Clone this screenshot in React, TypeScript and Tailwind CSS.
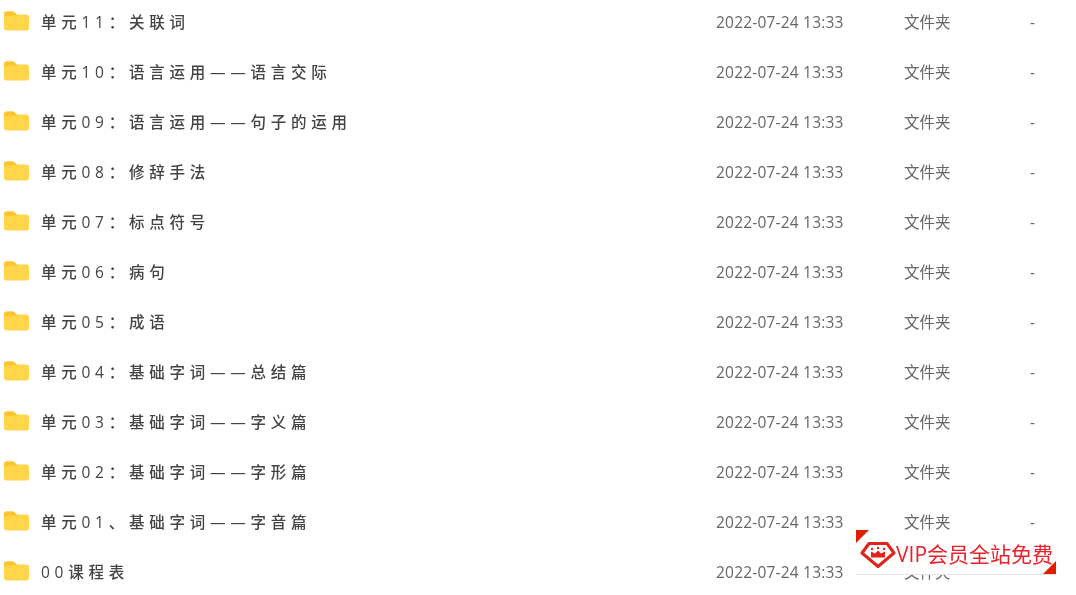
const rows = [
  "单元11：关联词",
  "单元10：语言运用——语言交际",
  "单元09：语言运用——句子的运用",
  "单元08：修辞手法",
  "单元07：标点符号",
  "单元06：病句",
  "单元05：成语",
  "单元04：基础字词——总结篇",
  "单元03：基础字词——字义篇",
  "单元02：基础字词——字形篇",
  "单元01、基础字词——字音篇",
  "00课程表",
]

function FolderIcon() {
  return (
    <svg width="25" height="20" viewBox="0 0 26 20" preserveAspectRatio="none" className="shrink-0">
      <path d="M0 3a2.5 2.5 0 0 1 2.5-2.5h6c1.5 0 2.2.6 3 1.5l1.5 1.5h10.5a2.5 2.5 0 0 1 2.5 2.5v11a2.5 2.5 0 0 1-2.5 2.5h-21a2.5 2.5 0 0 1-2.5-2.5z" fill="#ffd64a" />
      <path d="M0 3a2.5 2.5 0 0 1 2.5-2.5h6c1.5 0 2.2.6 3 1.5l2.5 2.5c-3 0-14 0-14 2z" fill="#fdc42f" />
    </svg>
  )
}

function VipBadge() {
  return (
    <div className="absolute left-[856px] top-[530px] w-[200px] h-[45px] bg-white border-b border-[#e5e5e5] flex items-center">
      <div className="absolute left-0 top-0 w-0 h-0 border-t-[13px] border-r-[13px] border-t-[#dd2000] border-r-transparent" />
      <div className="absolute right-0 bottom-0 w-0 h-0 border-b-[13px] border-l-[13px] border-b-[#dd2000] border-l-transparent" />
      <svg width="36" height="30" viewBox="0 0 36 30" className="ml-[4px] mt-[6px] shrink-0">
        <path d="M9 3.5h18l7 9.5-16 13.5L2 13z" fill="none" stroke="#e2231a" strokeWidth="3" strokeLinejoin="round" />
        <circle cx="12" cy="9" r="1.2" fill="#e2231a" />
        <circle cx="18" cy="8" r="1.2" fill="#e2231a" />
        <circle cx="24" cy="9" r="1.2" fill="#e2231a" />
        <path d="M11 11.5l4 2 3-3 3 3 4-2v6H11z" fill="#e2231a" />
      </svg>
      <span className="text-[21px] leading-none text-[#e8222a] whitespace-nowrap mt-[4px] font-['Open_Sans','Noto_Sans_CJK_SC',sans-serif]">VIP会员全站免费</span>
    </div>
  )
}

export default function App() {
  return (
    <div className="relative w-[1076px] h-[595px] overflow-hidden bg-white blur-[0.4px] font-['Open_Sans','Noto_Sans_CJK_SC',sans-serif]">
      <div className="flex flex-col -mt-[4px]">
        {rows.map((name) => (
          <div key={name} className="flex items-center h-[50px] shrink-0 text-[15.5px]">
            <div className="w-[41px] pl-[4px] shrink-0"><FolderIcon /></div>
            <div className="w-[675px] shrink-0 mt-[4px] tracking-[4.75px] text-[#444] font-medium whitespace-nowrap">{name}</div>
            <div className="w-[188px] shrink-0 mt-[4px] tracking-[0.2px] text-[#666] whitespace-nowrap">2022-07-24 13:33</div>
            <div className="w-[126px] shrink-0 mt-[4px] text-[#666]">文件夹</div>
            <div className="mt-[4px] text-[#666]">-</div>
          </div>
        ))}
      </div>
      <VipBadge />
    </div>
  )
}
